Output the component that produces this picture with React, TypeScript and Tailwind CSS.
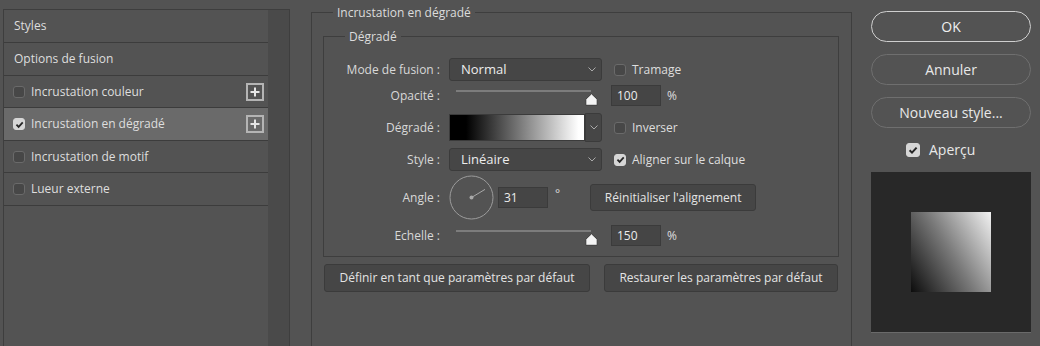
import React from 'react';

const Box = ({ checked, big }: { checked?: boolean; big?: boolean }) => (
    <span
        className={`flex items-center justify-center shrink-0 rounded-[3px] border ${
            big ? 'w-[14px] h-[14px]' : 'w-[12px] h-[12px]'
        } ${checked ? 'bg-[#d6d6d6] border-[#d6d6d6]' : 'bg-[#474747] border-[#6a6a6a]'}`}
    >
        {checked && (
            <svg width={big ? 10 : 9} height={big ? 10 : 9} viewBox="0 0 10 10">
                <path d="M1.6 5.2 L4 7.6 L8.6 2.6" fill="none" stroke="#262626" strokeWidth="2" />
            </svg>
        )}
    </span>
);

const Chevron = () => (
    <svg width="8" height="5" viewBox="0 0 8 5" className="shrink-0">
        <path d="M0.5 0.5 L4 4 L7.5 0.5" fill="none" stroke="#a9a9a9" strokeWidth="1" />
    </svg>
);

const PlusBox = () => (
    <span className="flex items-center justify-center w-[18px] h-[18px] border-2 border-[#b4b4b4]">
        <svg width="12" height="12" viewBox="0 0 12 12">
            <path d="M6 1.5 V10.5 M1.5 6 H10.5" stroke="#e6e6e6" strokeWidth="2" />
        </svg>
    </span>
);

const Thumb = () => (
    <svg width="13" height="13" viewBox="0 0 13 13">
        <path d="M6.5 0.8 L12.2 6.3 L12.2 12.3 L0.8 12.3 L0.8 6.3 Z" fill="#f4f4f4" stroke="#3a3a3a" strokeWidth="1" strokeLinejoin="round" />
    </svg>
);

// Curseur : piste grise + poignée tout à droite
const Slider = () => (
    <div className="relative w-[153px] h-full">
        <div className="absolute left-[7px] top-[5px] w-[135px] h-[2px] bg-[#7c7c7c]" />
        <div className="absolute left-[136px] top-[8px]">
            <Thumb />
        </div>
    </div>
);

const Select = ({ value }: { value: string }) => (
    <div className="flex items-center justify-between w-[153px] h-[23px] pl-[11px] pr-[5px] bg-[#464646] border border-[#3b3b3b] rounded-[3px] text-[13px] text-[#ececec]">
        <span>{value}</span>
        <Chevron />
    </div>
);

const Field = ({ value }: { value: string }) => (
    <div className="flex items-center w-[50px] h-[21px] pl-[5px] bg-[#454545] border border-[#3b3b3b] text-[12px] text-[#ececec]">
        {value}
    </div>
);

const Label = ({ text }: { text: string }) => (
    <span className="w-[117px] pr-[1px] text-right shrink-0 mr-[8px] text-[#d8d8d8]">{text}</span>
);

const Btn = ({ text, w }: { text: string; w: string }) => (
    <div className={`flex items-center justify-center ${w} h-[27px] bg-[#464646] border border-[#3b3b3b] rounded-[3px] text-[12px] text-[#e4e4e4]`}>
        {text}
    </div>
);

const rows = [
    { label: 'Styles', box: false },
    { label: 'Options de fusion', box: false },
    { label: 'Incrustation couleur', box: true, plus: true },
    { label: 'Incrustation en dégradé', box: true, checked: true, plus: true, active: true },
    { label: 'Incrustation de motif', box: true },
    { label: 'Lueur externe', box: true },
];
const rowHeights = ['h-[33px]', 'h-[33px]', 'h-[32px]', 'h-[33px]', 'h-[32px]', 'h-[33px]'];

export default function App() {
    return (
        <div className="flex w-[1040px] h-[346px] overflow-hidden bg-[#535353] font-['Open_Sans',sans-serif] text-[12px] text-[#dedede]">
            {/* Liste des styles */}
            <div className="flex shrink-0 ml-[3px] mt-[9px] w-[287px] h-[360px] border border-[#3e3e3e]">
                <div className="flex flex-col w-[264px]">
                    {rows.map((r, i) => (
                        <div
                            key={r.label}
                            className={`flex items-center shrink-0 ${rowHeights[i]} border-b border-[#3c3c3c] ${
                                r.box ? 'pl-[9px]' : 'pl-[10px]'
                            } pr-[4px] ${r.active ? 'bg-[#6a6a6a]' : ''}`}
                        >
                            {r.box && <Box checked={r.checked} />}
                            <span className={r.box ? 'ml-[6px] flex-1' : 'flex-1'}>{r.label}</span>
                            {r.plus && <PlusBox />}
                        </div>
                    ))}
                </div>
                <div className="w-[21px] bg-[#4a4a4a]" />
            </div>

            {/* Panneau central */}
            <fieldset className="shrink-0 ml-[21px] mt-[5px] w-[541px] h-[380px] border border-[#3e3e3e] px-[11px]">
                <legend className="ml-[10px] px-[4px] leading-[15px] text-[#dcdcdc]">Incrustation en dégradé</legend>

                <fieldset className="mt-[9px] w-[516px] border border-[#3e3e3e] pb-[10px]">
                    <legend className="ml-[21px] px-[4px] leading-[15px] text-[#dcdcdc]">Dégradé</legend>

                    <div className="flex items-center h-[23px] mt-[14px]">
                        <Label text="Mode de fusion :" />
                        <Select value="Normal" />
                        <span className="ml-[12px]"><Box /></span>
                        <span className="ml-[6px]">Tramage</span>
                    </div>

                    <div className="flex items-center h-[21px] mt-[4px]">
                        <Label text="Opacité :" />
                        <Slider />
                        <span className="ml-[9px]"><Field value="100" /></span>
                        <span className="ml-[6px]">%</span>
                    </div>

                    <div className="flex items-center h-[29px] mt-[7px]">
                        <Label text="Dégradé :" />
                        <div className="flex items-center w-[153px] h-[29px]">
                            <div className="w-[136px] h-[27px] border border-[#3b3b3b] bg-[linear-gradient(to_right,#000_12%,#fff_96%)]" />
                            <div className="flex items-center justify-center w-[17px] h-[29px] bg-[#464646] border border-[#3b3b3b] rounded-r-[3px]">
                                <Chevron />
                            </div>
                        </div>
                        <span className="ml-[12px]"><Box /></span>
                        <span className="ml-[6px]">Inverser</span>
                    </div>

                    <div className="flex items-center h-[23px] mt-[6px]">
                        <Label text="Style :" />
                        <Select value="Linéaire" />
                        <span className="ml-[12px]"><Box checked /></span>
                        <span className="ml-[6px]">Aligner sur le calque</span>
                    </div>

                    <div className="flex items-center h-[45px] mt-[4px]">
                        <Label text="Angle :" />
                        <svg width="45" height="45" viewBox="0 0 45 45" className="shrink-0">
                            <circle cx="22.5" cy="22.5" r="21.5" fill="none" stroke="#9c9c9c" strokeWidth="1" />
                            <circle cx="22.5" cy="22.5" r="2" fill="#a8a8a8" />
                            <line x1="22.5" y1="22.5" x2="36" y2="14.4" stroke="#a8a8a8" strokeWidth="1" />
                        </svg>
                        <span className="ml-[4px]"><Field value="31" /></span>
                        <span className="ml-[7px] self-start mt-[10px]">°</span>
                        <span className="ml-[30px]"><Btn text="Réinitialiser l'alignement" w="w-[166px]" /></span>
                    </div>

                    <div className="flex items-center h-[21px] mt-[5px]">
                        <Label text="Echelle :" />
                        <Slider />
                        <span className="ml-[9px]"><Field value="150" /></span>
                        <span className="ml-[6px]">%</span>
                    </div>
                </fieldset>

                <div className="flex mt-[7px] ml-[1px] gap-[14px]">
                    <div className="flex items-center justify-center w-[266px] h-[28px] bg-[#464646] border border-[#3b3b3b] rounded-[3px] text-[#e4e4e4]">
                        Définir en tant que paramètres par défaut
                    </div>
                    <div className="flex items-center justify-center w-[234px] h-[28px] bg-[#464646] border border-[#3b3b3b] rounded-[3px] text-[#e4e4e4]">
                        Restaurer les paramètres par défaut
                    </div>
                </div>
            </fieldset>

            {/* Boutons + aperçu */}
            <div className="flex flex-col shrink-0 ml-[19px] w-[160px] text-[14px]">
                <div className="flex items-center justify-center mt-[11px] h-[31px] rounded-full border-[1.5px] border-[#cfcfcf] text-[#f0f0f0]">OK</div>
                <div className="flex items-center justify-center mt-[12px] h-[31px] rounded-full border border-[#6f6f6f] text-[#e8e8e8]">Annuler</div>
                <div className="flex items-center justify-center mt-[12px] h-[31px] rounded-full border border-[#6f6f6f] text-[#e8e8e8]">Nouveau style...</div>
                <div className="flex items-center mt-[14px] h-[15px] pl-[35px]">
                    <Box checked big />
                    <span className="ml-[9px] text-[#e8e8e8]">Aperçu</span>
                </div>
                <div className="flex items-center justify-center mt-[15px] h-[161px] bg-[#282828] border-b border-[#6a6a6a]">
                    <div className="w-[80px] h-[80px] bg-[linear-gradient(59deg,#0c0c0c_0%,#7a7a7a_50%,#f2f2f2_100%)]" />
                </div>
            </div>
        </div>
    );
}
